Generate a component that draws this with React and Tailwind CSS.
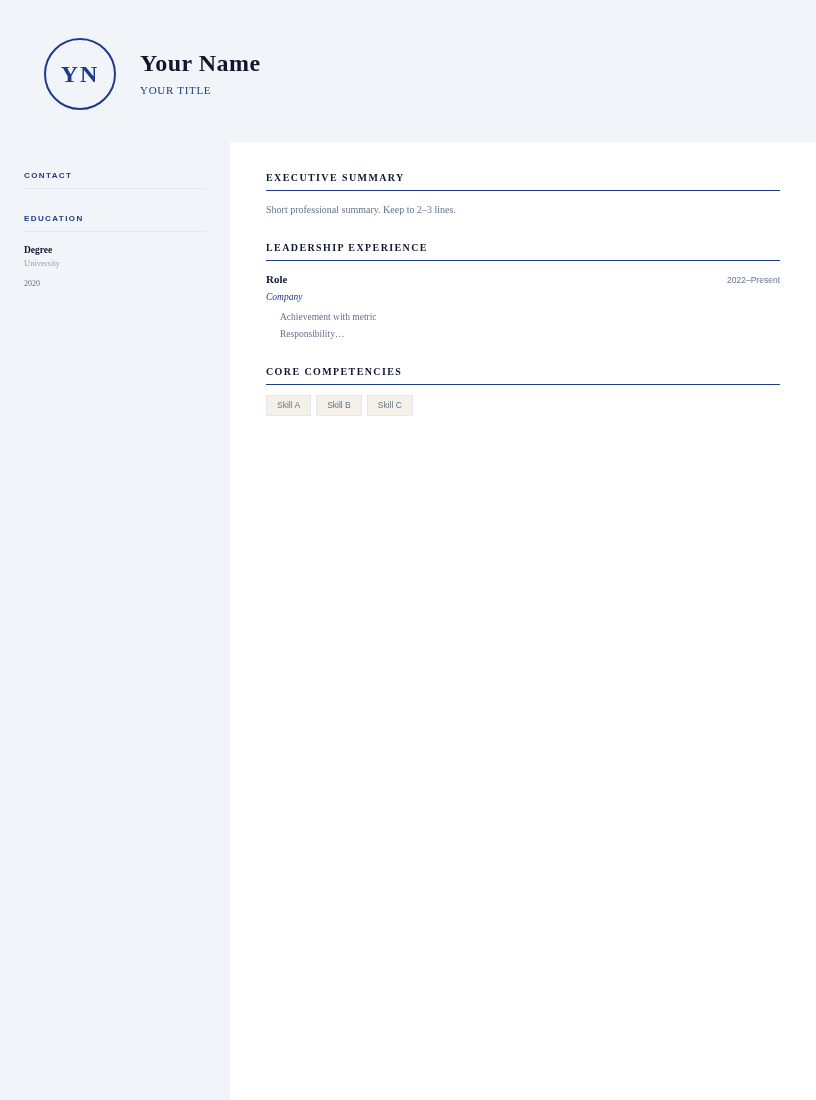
const serif = "font-['Liberation_Serif',serif]";
const sans = "font-['Liberation_Sans',sans-serif]";

const SideHeading = ({ children }) => (
  <h3 className={`${sans} text-[8px] leading-[9px] font-bold uppercase tracking-[1.4px] text-[#1e3a8a] pb-[8px] border-b border-[#e2e8f0]`}>
    {children}
  </h3>
);

const MainHeading = ({ children }) => (
  <h2 className="text-[10px] leading-[12px] font-bold uppercase tracking-[1.4px] text-[#0f172a] pb-[6px] border-b border-[#1e3a8a]">
    {children}
  </h2>
);

const Skill = ({ children }) => (
  <span className={`${sans} text-[8.5px] leading-[11px] text-[#64748b] bg-[#f5f0e8] border border-[#e2e8f0] px-[10px] py-[4px]`}>
    {children}
  </span>
);

export default function App() {
  return (
    <div className={`${serif} will-change-transform w-[816px] min-h-[1100px] bg-[#f1f5f9] flex flex-col`}>
      {/* Header */}
      <header className="h-[142px] flex items-center gap-6 pl-11 pt-[6px]">
        <div className="w-[72px] h-[72px] rounded-full border-2 border-[#1e3a8a] flex items-center justify-center">
          <span className="text-[24px] leading-none font-bold tracking-[2px] text-[#1e3a8a]">YN</span>
        </div>
        <div className="-mt-[3px]">
          <h1 className="text-[24px] leading-[30px] font-bold tracking-[0.5px] text-[#0f172a]">Your Name</h1>
          <p className="mt-[5px] text-[11px] leading-[14px] uppercase tracking-[0.7px] text-[#1e3a8a]">Your Title</p>
        </div>
      </header>

      <div className="flex flex-1">
        {/* Sidebar */}
        <aside className="w-[230px] px-6 pt-[29px]">
          <SideHeading>Contact</SideHeading>
          <div className="mt-[25px]">
            <SideHeading>Education</SideHeading>
          </div>
          <p className="mt-[12px] text-[9.5px] leading-[12px] font-bold text-[#0f172a]">Degree</p>
          <p className="mt-[1px] text-[8.5px] leading-[12px] text-[#94a3b8]">University</p>
          <p className="mt-[9px] text-[8px] leading-[12px] text-[#64748b]">2020</p>
        </aside>

        {/* Main column */}
        <main className="flex-1 bg-white pl-9 pr-9 pt-[30px]">
          <section>
            <MainHeading>Executive Summary</MainHeading>
            <p className="mt-[12px] text-[10px] leading-[14px] text-[#64748b]">
              Short professional summary. Keep to 2–3 lines.
            </p>
          </section>

          <section className="mt-[25px]">
            <MainHeading>Leadership Experience</MainHeading>
            <div className="mt-[12px] flex justify-between items-center">
              <span className="text-[11px] leading-[13px] font-bold text-[#0f172a]">Role</span>
              <span className={`${sans} text-[8.5px] leading-[11px] pt-[2px] text-[#64748b]`}>2022–Present</span>
            </div>
            <p className="mt-[5px] text-[9.5px] leading-[12px] italic text-[#1e3a8a]">Company</p>
            <ul className="mt-[5.5px] pl-[14px] text-[9.5px] leading-[17px] text-[#64748b]">
              <li>Achievement with metric</li>
              <li>Responsibility…</li>
            </ul>
          </section>

          <section className="mt-[23.5px]">
            <MainHeading>Core Competencies</MainHeading>
            <div className="mt-[10px] flex gap-[5px]">
              <Skill>Skill A</Skill>
              <Skill>Skill B</Skill>
              <Skill>Skill C</Skill>
            </div>
          </section>
        </main>
      </div>
    </div>
  );
}
